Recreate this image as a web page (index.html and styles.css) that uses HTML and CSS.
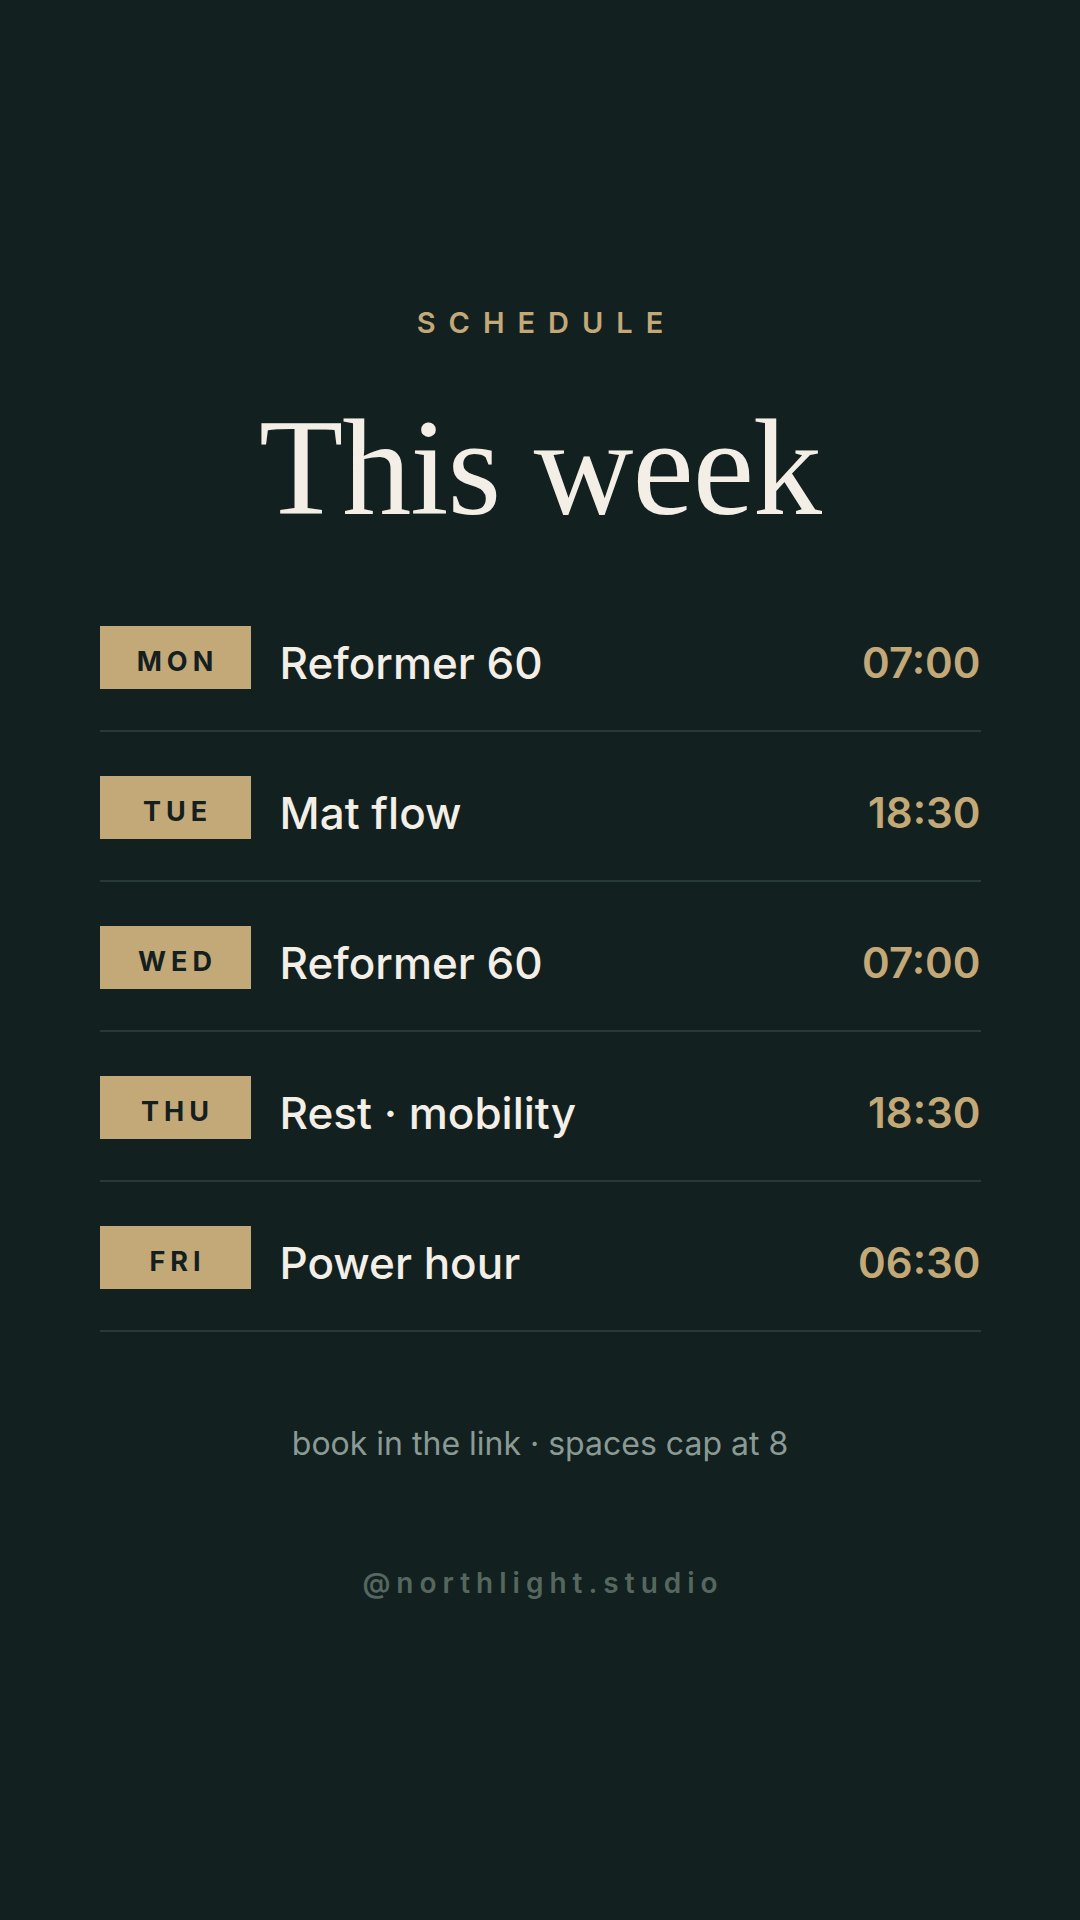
FILE: index.html
```html
<!DOCTYPE html>
<html lang="en">
<head>
  <meta charset="UTF-8" />
  <meta name="viewport" content="width=device-width, initial-scale=1.0"/>
  <title>This week</title>
  <link rel="stylesheet" href="styles.css">
</head>
<body>

  <main class="page">
    <div class="eyebrow">SCHEDULE</div>
    <h1 class="title">This week</h1>

    <ul class="schedule">
      <li class="row">
        <span class="day">MON</span>
        <span class="session">Reformer 60</span>
        <span class="time">07:00</span>
      </li>
      <li class="row">
        <span class="day">TUE</span>
        <span class="session">Mat flow</span>
        <span class="time">18:30</span>
      </li>
      <li class="row">
        <span class="day">WED</span>
        <span class="session">Reformer 60</span>
        <span class="time">07:00</span>
      </li>
      <li class="row">
        <span class="day">THU</span>
        <span class="session">Rest · mobility</span>
        <span class="time">18:30</span>
      </li>
      <li class="row">
        <span class="day">FRI</span>
        <span class="session">Power hour</span>
        <span class="time">06:30</span>
      </li>
    </ul>

    <p class="note">book in the link · spaces cap at 8</p>
    <p class="handle">@northlight.studio</p>
  </main>

</body>
</html>
```

FILE: styles.css
```css
* {
  margin: 0;
  padding: 0;
  box-sizing: border-box;
}

body {
  width: 1080px;
  height: 1920px;
  font-family: 'Inter', 'Noto Sans', sans-serif;
  background-color: #132020;
  color: #f3efe7;
}

.page {
  display: flex;
  flex-direction: column;
  align-items: center;
  padding-top: 308px;
}

.eyebrow {
  font-size: 29px;
  line-height: 1;
  font-weight: 600;
  letter-spacing: 13px;
  padding-left: 13px;
  color: #c3a878;
}

.title {
  margin-top: 62px;
  font-family: 'Liberation Serif', 'DejaVu Serif', serif;
  font-size: 138px;
  line-height: 1;
  font-weight: 400;
  letter-spacing: -1px;
  color: #f3efe7;
}

.schedule {
  list-style: none;
  width: 881px;
  margin-top: 45px;
}

.row {
  display: flex;
  align-items: center;
  padding: 44px 0 41px;
  border-bottom: 2px solid #283a36;
}

.day {
  display: flex;
  align-items: center;
  justify-content: center;
  width: 151px;
  height: 63px;
  padding: 8px 0 0 5px;
  background-color: #c3a878;
  color: #14201f;
  font-size: 27px;
  font-weight: 700;
  letter-spacing: 5px;
}

.session {
  flex: 1;
  margin-left: 29px;
  padding-top: 10px;
  font-size: 44px;
  line-height: 1;
  font-weight: 500;
  color: #f3efe7;
}

.time {
  padding-top: 10px;
  font-size: 42px;
  line-height: 1;
  font-weight: 600;
  color: #c3a878;
}

.note {
  margin-top: 96px;
  font-size: 32px;
  line-height: 1;
  color: #8a9a94;
}

.handle {
  margin-top: 109px;
  font-size: 28px;
  line-height: 1;
  font-weight: 600;
  letter-spacing: 6px;
  padding-left: 6px;
  color: #55675f;
}
```
